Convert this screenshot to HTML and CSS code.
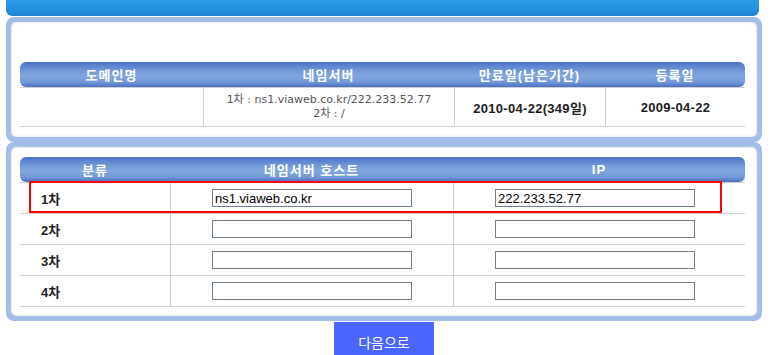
FILE: index.html
```html
<!DOCTYPE html>
<html lang="ko">
<head>
    <meta charset="UTF-8">
    <title>네임서버 변경</title>
    <link rel="stylesheet" href="styles.css">
</head>
<body>
    <div class="topbar"></div>

    <div class="panel">
        <div class="box box-info">
            <table class="grid">
                <colgroup>
                    <col style="width:183px">
                    <col style="width:251px">
                    <col style="width:151px">
                    <col style="width:140px">
                </colgroup>
                <thead>
                    <tr>
                        <th>도메인명</th>
                        <th>네임서버</th>
                        <th>만료일(남은기간)</th>
                        <th>등록일</th>
                    </tr>
                </thead>
                <tbody>
                    <tr class="info-row">
                        <td></td>
                        <td class="ns-list">1차 : ns1.viaweb.co.kr/222.233.52.77<br>2차 : /</td>
                        <td class="date">2010-04-22(349일)</td>
                        <td class="date">2009-04-22</td>
                    </tr>
                </tbody>
            </table>
        </div>
    </div>

    <div class="panel">
        <div class="box box-form">
            <div class="form-wrap">
                <table class="grid">
                    <colgroup>
                        <col style="width:150px">
                        <col style="width:283px">
                        <col style="width:292px">
                    </colgroup>
                    <thead>
                        <tr>
                            <th>분류</th>
                            <th>네임서버 호스트</th>
                            <th>IP</th>
                        </tr>
                    </thead>
                    <tbody>
                        <tr class="ns-row">
                            <td class="label">1차</td>
                            <td class="field"><input type="text" value="ns1.viaweb.co.kr"></td>
                            <td class="field field-ip"><input type="text" value="222.233.52.77"></td>
                        </tr>
                        <tr class="ns-row">
                            <td class="label">2차</td>
                            <td class="field"><input type="text"></td>
                            <td class="field field-ip"><input type="text"></td>
                        </tr>
                        <tr class="ns-row">
                            <td class="label">3차</td>
                            <td class="field"><input type="text"></td>
                            <td class="field field-ip"><input type="text"></td>
                        </tr>
                        <tr class="ns-row">
                            <td class="label">4차</td>
                            <td class="field"><input type="text"></td>
                            <td class="field field-ip"><input type="text"></td>
                        </tr>
                    </tbody>
                </table>
                <!-- 1차 강조 표시 -->
                <div class="highlight"></div>
            </div>
        </div>
    </div>

    <div class="actions">
        <button type="button" class="next-btn">다음으로</button>
    </div>
</body>
</html>
```

FILE: styles.css
```css
body {
    margin: 0;
    font-family: "Liberation Sans", "Noto Sans CJK KR", sans-serif;
    font-size: 13px;
    color: #333;
    background: #fff;
}
.topbar {
    width: 753px;
    height: 16px;
    margin-left: 6px;
    background: linear-gradient(#2b9be6, #2190dd 60%, #1d82d2);
    border-radius: 0 0 6px 6px;
}
.panel {
    width: 746px;
    margin: 1px 0 0 6px;
    border: 5px solid #a2bde8;
    border-radius: 8px;
    background: #a2bde8;
}
.panel + .panel {
    margin-top: 0;
}
.box {
    background: #fff;
    border-radius: 5px;
    box-shadow: inset 0 0 3px rgba(0, 0, 0, 0.18);
    padding: 0 12px 0 9px;
}
.box-info {
    padding-top: 40px;
    padding-bottom: 10px;
}
.box-form {
    padding-top: 10px;
    padding-bottom: 9px;
}
.grid {
    width: 725px;
    border-collapse: separate;
    border-spacing: 0;
    table-layout: fixed;
}
.grid th {
    height: 25px;
    padding: 0;
    color: #fff;
    font-size: 13px;
    font-weight: bold;
    letter-spacing: 1px;
    text-align: center;
    background: linear-gradient(#4a72c5, #6e94d6 30%, #82a6df 55%, #7399d8 80%, #4b70c2);
}
.grid th:first-child {
    border-radius: 6px 0 0 6px;
}
.grid th:last-child {
    border-radius: 0 6px 6px 0;
}
.grid td {
    padding: 0;
    border-bottom: 1px solid #cfcfcf;
    border-left: 1px solid #cfcfcf;
    text-align: center;
}
.grid td:first-child {
    border-left: none;
}
.grid tbody tr:first-child td {
    border-top: 1px solid #cfcfcf;
}
.info-row td {
    height: 38px;
}
.ns-list {
    font-family: "DejaVu Sans", "Noto Sans CJK KR", sans-serif;
    font-size: 11px;
    line-height: 14px;
    color: #555;
}
.date {
    font-weight: bold;
    letter-spacing: 0.3px;
    color: #222;
}
.form-wrap {
    position: relative;
}
.ns-row td {
    height: 30px;
}
.ns-row .label {
    padding-left: 21px;
    text-align: left;
    font-weight: bold;
    color: #222;
}
.grid .field-ip {
    padding-left: 41px;
    text-align: left;
}
.field input {
    box-sizing: border-box;
    width: 200px;
    height: 18px;
    margin: 0;
    padding: 0 2px;
    border: 1px solid #6f7f8e;
    font-family: "Liberation Sans", sans-serif;
    font-size: 13px;
    color: #000;
    vertical-align: middle;
}
.highlight {
    position: absolute;
    left: 9px;
    top: 24px;
    width: 689px;
    height: 28px;
    border: 2px solid #f00;
    pointer-events: none;
}
.actions {
    width: 756px;
    margin-left: 6px;
    padding-top: 1px;
    text-align: center;
}
.next-btn {
    width: 100px;
    height: 40px;
    border: none;
    background: #4a66fd;
    color: #fff;
    font-family: "Noto Sans CJK KR", sans-serif;
    font-size: 14px;
    cursor: pointer;
}
```
